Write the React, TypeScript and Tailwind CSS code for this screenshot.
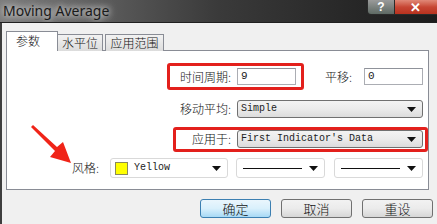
import React from "react";

const cjk = "font-['Noto_Sans_CJK_SC','Noto_Sans',sans-serif] font-light";
const mono = "font-['Liberation_Mono','DejaVu_Sans_Mono',monospace]";

function Caret() {
  return (
    <svg width="9" height="5" viewBox="0 0 9 5" className="shrink-0">
      <polygon points="0,0 9,0 4.5,5" fill="#111" />
    </svg>
  );
}

function Label({ children, className = "" }: { children: React.ReactNode; className?: string }) {
  return <span className={`${cjk} text-[12px] leading-none text-[#111] ${className}`}>{children}</span>;
}

function TextBox({ value, width }: { value: string; width: string }) {
  return (
    <div className={`${width} h-[17px] flex items-center bg-white border border-[#abadb3] border-t-[#8f929a] pl-[3px]`}>
      <span className={`${mono} text-[11px] text-[#222] leading-none`}>{value}</span>
    </div>
  );
}

function Combo({ value }: { value: string }) {
  return (
    <div className="w-[186px] h-[18px] flex items-center justify-between pl-[3px] pr-[6px] rounded-[3px] border border-[#707070] bg-gradient-to-b from-[#f3f3f3] via-[#ebebeb] to-[#dcdcdc]">
      <span className={`${mono} text-[10px] leading-none text-[#222] whitespace-pre`}>{value}</span>
      <Caret />
    </div>
  );
}

function FlatSelect({ width, children }: { width: string; children: React.ReactNode }) {
  return (
    <div className={`${width} h-[20px] flex items-center justify-between pl-[4px] pr-[6px] rounded-[3px] border border-[#d9d9d9] bg-white`}>
      {children}
      <Caret />
    </div>
  );
}

function Button({ label, primary = false }: { label: string; primary?: boolean }) {
  return (
    <div
      className={`w-[71px] h-[19px] flex items-center justify-center rounded-[3px] border ${
        primary
          ? "border-[#3c7fb1] bg-gradient-to-b from-[#eaf6fd] via-[#d9f0fc] to-[#a7d9f5]"
          : "border-[#707070] bg-gradient-to-b from-[#f2f2f2] via-[#ebebeb] to-[#d6d6d6]"
      }`}
    >
      <span className={`${cjk} text-[13px] leading-none text-[#111]`}>{label}</span>
    </div>
  );
}

export default function App() {
  return (
    <div className="relative w-[437px] h-[224px] overflow-hidden bg-[#f0f0f0] flex flex-col">
      {/* title bar */}
      <div className="h-[23px] shrink-0 flex items-start justify-between overflow-hidden bg-gradient-to-r from-[#7c7c7c] via-[#3a3a3a] to-[#1c1c1c] border-b border-[#202020]">
        <span className="pl-[3px] pt-[2px] font-['Noto_Sans',sans-serif] text-[14px] leading-[18px] text-[#1a1a1a] [text-shadow:0_0_6px_#e8e8e8,0_0_10px_#cfcfcf]">
          Moving Average
        </span>
        <div className="flex h-[15px] mr-[-6px]">
          <div className="w-[28px] h-[15px] flex items-center justify-center rounded-bl-[4px] border border-t-0 border-[#2a2a2a] bg-gradient-to-b from-[#9a9a9a] to-[#5e6a64]">
            <span className="font-['Liberation_Sans',sans-serif] font-bold text-[12px] leading-none text-white">?</span>
          </div>
          <div className="w-[48px] h-[15px] flex items-center justify-center rounded-br-[4px] border border-t-0 border-l-0 border-[#2a2a2a] bg-gradient-to-b from-[#e08877] via-[#c74634] to-[#b8321e]">
            <span className="font-['Liberation_Sans',sans-serif] font-bold text-[13px] leading-none text-white -ml-[6px]">✕</span>
          </div>
        </div>
      </div>

      {/* body */}
      <div className="flex-1 flex flex-col border-l-2 border-[#3e3e3e] pl-[4px]">
        {/* tabs */}
        <div className="flex items-end h-[20px] mt-[8px] relative z-10">
          <div className="w-[52px] h-[20px] bg-white border border-b-0 border-[#898c95] flex items-start pl-[9px] pt-[3px]">
            <Label className="text-[12px]">参数</Label>
          </div>
          <div className="w-[45px] h-[17px] bg-gradient-to-b from-[#f2f2f2] to-[#dcdcdc] border border-l-0 border-b-0 border-[#898c95] flex items-center justify-center">
            <Label>水平位</Label>
          </div>
          <div className="ml-[2px] w-[59px] h-[17px] bg-gradient-to-b from-[#f2f2f2] to-[#dcdcdc] border border-b-0 border-[#898c95] flex items-center justify-center">
            <Label>应用范围</Label>
          </div>
        </div>

        {/* panel */}
        <div className="w-[423px] h-[140px] -mt-px bg-white border border-[#898c95] flex flex-col pt-[17px]">
          <div className="flex items-center h-[17px] pl-[154px]">
            <Label className="w-[70px] text-right">时间周期:</Label>
            <div className="ml-[6px]">
              <TextBox value="9" width="w-[59px]" />
            </div>
            <Label className="ml-[29px]">平移:</Label>
            <div className="ml-[12px]">
              <TextBox value="0" width="w-[59px]" />
            </div>
          </div>
          <div className="flex items-center h-[18px] mt-[15px] pl-[154px]">
            <Label className="w-[70px] text-right">移动平均:</Label>
            <div className="ml-[6px]">
              <Combo value="Simple" />
            </div>
          </div>
          <div className="flex items-center h-[18px] mt-[12px] pl-[154px]">
            <Label className="w-[70px] text-right">应用于:</Label>
            <div className="ml-[6px]">
              <Combo value="First Indicator's Data" />
            </div>
          </div>
          <div className="flex items-center h-[20px] mt-[10px] pl-[65px]">
            <Label className="w-[36px]">风格:</Label>
            <div className="ml-[2px] flex items-center gap-[8px]">
              <FlatSelect width="w-[118px]">
                <div className="flex items-center gap-[6px]">
                  <div className="w-[13px] h-[13px] bg-[#ffff00] border border-[#8a8a5a]" />
                  <span className={`${mono} text-[10px] leading-none text-[#222]`}>Yellow</span>
                </div>
              </FlatSelect>
              <FlatSelect width="w-[89px]">
                <div className="ml-[2px] w-[59px] h-px bg-[#111]" />
              </FlatSelect>
              <div className="ml-px">
                <FlatSelect width="w-[89px]">
                  <div className="ml-[2px] w-[59px] h-px bg-[#111]" />
                </FlatSelect>
              </div>
            </div>
          </div>
        </div>

        {/* buttons */}
        <div className="flex gap-[10px] mt-[9px] pl-[194px]">
          <Button label="确定" primary />
          <Button label="取消" />
          <Button label="重设" />
        </div>
      </div>

      {/* annotation overlays */}
      <div className="absolute left-[167px] top-[63px] w-[137px] h-[27px] border-[3px] border-[#e3201c] rounded-[3px]" />
      <div className="absolute left-[173px] top-[127px] w-[255px] h-[25px] border-[3px] border-[#e3201c] rounded-[3px]" />
      <svg className="absolute left-[28px] top-[122px]" width="50" height="46" viewBox="28 122 50 46">
        <polygon
          points="31,127 33,125 57,147 63,142 71,163 50,157 55,151"
          fill="#f02418"
        />
      </svg>
    </div>
  );
}
